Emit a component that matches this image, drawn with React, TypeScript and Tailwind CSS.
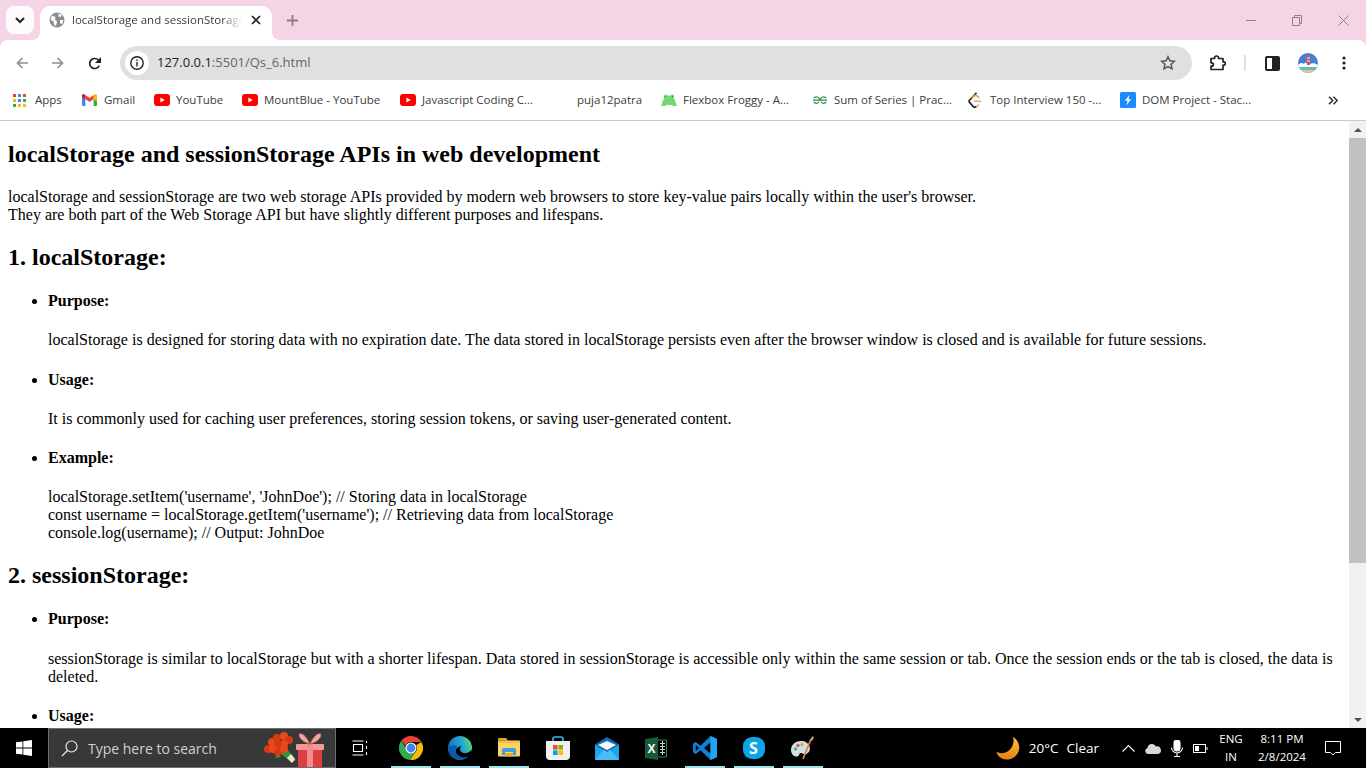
import { ReactNode } from 'react';

const Globe = () => (
  <svg width="16" height="16" viewBox="0 0 16 16">
    <circle cx="8" cy="8" r="7.5" fill="#8a8d91" />
    <path d="M3 3.5 6.5 5 6 7.5 8 9.5 7 14 5 13 4.5 9.5 1.5 7.5ZM9.5 1.5 13 3 11.5 5 9.5 4.5ZM11 8h3.5L13 12.5 11 11Z" fill="#fff" />
  </svg>
);

const YouTube = () => (
  <svg width="16" height="12" viewBox="0 0 16 12">
    <rect width="16" height="12" rx="3" fill="#f00" />
    <path d="M6.4 3.4 10.8 6 6.4 8.6Z" fill="#fff" />
  </svg>
);

const Gmail = () => (
  <svg width="15" height="12" viewBox="0 0 15 12">
    <path d="M0 2v9a1 1 0 0 0 1 1h2.4V5Z" fill="#4285f4" />
    <path d="M15 2v9a1 1 0 0 1-1 1h-2.4V5Z" fill="#34a853" />
    <path d="M11.6 1v4L15 7.5V1.6C15 .4 13.7-.3 12.8.4Z" fill="#fbbc04" />
    <path d="M3.4 5V1l4.1 3.1L11.6 1v4L7.5 8Z" fill="#ea4335" />
    <path d="M0 1.6V3l3.4 2.5V1L2.2.4C1.3-.3 0 .4 0 1.6Z" fill="#c5221f" />
  </svg>
);

const AppsGrid = () => (
  <svg width="13" height="13" viewBox="0 0 13 13">
    {['#ea4335', '#4285f4', '#ea4335', '#fbbc04', '#4285f4', '#34a853', '#34a853', '#fbbc04', '#fbbc04'].map((c, i) => (
      <rect key={i} x={(i % 3) * 5} y={Math.floor(i / 3) * 5} width="3" height="3" fill={c} />
    ))}
  </svg>
);

const Frog = () => (
  <svg width="16" height="12" viewBox="0 0 16 12">
    <path d="M3 5V2.200a1.700 1.700 0 0 1 3.300-.6h3.400A1.700 1.700 0 0 1 13 2.200V5c1 .8 1.500 2 1.700 3.500L16 12h-4.500l-.5-1H5l-.5 1H0l1.300-3.500C1.500 7 2 5.800 3 5Z" fill="#6fdc6f" />
    <circle cx="4.600" cy="2.400" r=".7" fill="#2e8b3a" />
    <circle cx="11.400" cy="2.400" r=".7" fill="#2e8b3a" />
  </svg>
);

const Gfg = () => (
  <svg width="16" height="8" viewBox="0 0 16 8" fill="none" stroke="#2f8d46" strokeWidth="1.200">
    <path d="M1 4.200h6.700A3.300 3.300 0 0 0 1.700 2.300M1.700 5.900a3.300 3.300 0 0 0 5.500-.2" />
    <path d="M15 4.200H8.300A3.300 3.300 0 0 1 14.300 2.300M14.300 5.900a3.300 3.300 0 0 1-5.500-.2" />
  </svg>
);

const LeetCode = () => (
  <svg width="14" height="17" viewBox="0 0 14 17" fill="none" strokeWidth="1.6">
    <path d="M8.5.8 1.5 8.2a1.5 1.5 0 0 0 0 2.2l3.6 4a2.3 2.3 0 0 0 3.2.2" stroke="#222" />
    <path d="M8.3 14.6 11 13M3.6 6l2.6-2a2.4 2.4 0 0 1 3.2.2l1.8 1.6" stroke="#f0a32a" />
    <path d="M6 9.3h7" stroke="#b5b5b5" />
  </svg>
);

const Bolt = () => (
  <svg width="16" height="16" viewBox="0 0 16 16">
    <rect width="16" height="16" rx="1.5" fill="#1a8cff" />
    <path d="M9.6 2.8 4.8 8.8h2.8L6.4 13.2l4.8-6H8.4Z" fill="#fff" />
  </svg>
);

const Corner = ({ flip }: { flip?: boolean }) => (
  <svg width="8" height="8" viewBox="0 0 8 8" className={flip ? 'absolute bottom-0 left-[-8px] -scale-x-100' : 'absolute bottom-0 right-[-8px]'}>
    <path d="M0 0A8 8 0 0 0 8 8H0Z" fill="#fff" />
  </svg>
);

const bookmarks: { w: string; icon?: ReactNode; label: string }[] = [
  { w: 'w-[69px]', icon: <AppsGrid />, label: 'Apps' },
  { w: 'w-[72px]', icon: <Gmail />, label: 'Gmail' },
  { w: 'w-[88px]', icon: <YouTube />, label: 'YouTube' },
  { w: 'w-[158px]', icon: <YouTube />, label: 'MountBlue - YouTube' },
  { w: 'w-[177px]', icon: <YouTube />, label: 'Javascript Coding C...' },
  { w: 'w-[84px]', label: 'puja12patra' },
  { w: 'w-[151px]', icon: <Frog />, label: 'Flexbox Froggy - A...' },
  { w: 'w-[156px]', icon: <Gfg />, label: 'Sum of Series | Prac...' },
  { w: 'w-[152px]', icon: <LeetCode />, label: 'Top Interview 150 -...' },
  { w: 'w-[208px]', icon: <Bolt />, label: 'DOM Project - Stac...' },
];

const ChromeLogo = () => (
  <svg width="24" height="24" viewBox="0 0 24 24">
    <path d="M12 0a12 12 0 0 1 10.4 6H12a6 6 0 0 0-5.6 3.8L2.5 4.6A12 12 0 0 1 12 0Z" fill="#ea4335" />
    <path d="M22.4 6A12 12 0 0 1 11 24l5.2-7.7A6 6 0 0 0 17.2 9Z" fill="#fbbc04" />
    <path d="M11 24A12 12 0 0 1 2.5 4.6l5 8.8a6 6 0 0 0 8.7 2.9Z" fill="#34a853" />
    <circle cx="12" cy="12" r="5.6" fill="#fff" />
    <circle cx="12" cy="12" r="4.4" fill="#4285f4" />
  </svg>
);

const EdgeLogo = () => (
  <svg width="24" height="24" viewBox="0 0 24 24">
    <defs>
      <linearGradient id="edgeTop" x1="0" y1="0.6" x2="1" y2="0.3">
        <stop offset="0" stopColor="#1668c4" />
        <stop offset="0.55" stopColor="#1f9fd8" />
        <stop offset="1" stopColor="#58d878" />
      </linearGradient>
    </defs>
    <circle cx="12" cy="12" r="12" fill="url(#edgeTop)" />
    <path d="M24 13.500c-4 5-11 4.500-12 .5-.4-1.700.5-3 2-3.500-4-.5-6.500 2-6.500 5.500 0 4 3.500 7 8.500 8 4-1.200 7-5 8-10.500Z" fill="#000" />
    <path d="M0 12c0 7 5.500 12 12 12 3.500 0 6.500-1.500 8.500-3.800-4 1.800-9 1-11.500-2-2-2.500-2-6 0-8.200C5 9 1.500 9.500 0 12Z" fill="#0c59a8" />
  </svg>
);

const FolderLogo = () => (
  <svg width="22" height="20" viewBox="0 0 22 20">
    <path d="M0 1a1 1 0 0 1 1-1h7l2 2.500H0Z" fill="#e0a526" />
    <rect y="2.500" width="22" height="16" rx="1" fill="#fcd462" />
    <path d="M0 5h22v-1.500H0Z" fill="#f2b93b" />
    <path d="M4 17V12a2 2 0 0 1 2-2h10a2 2 0 0 1 2 2v5h-3v-3H7v3Z" fill="#3f9fe0" />
    <rect x="7" y="15" width="8" height="3.500" fill="#e9ae2e" />
  </svg>
);

const StoreLogo = () => (
  <svg width="24" height="24" viewBox="0 0 24 24">
    <path d="M7 7V3a2 2 0 0 1 2-2h6a2 2 0 0 1 2 2v4" fill="none" stroke="#35b8ef" strokeWidth="1.600" />
    <path d="M0 5h24v15a4 4 0 0 1-4 4H4a4 4 0 0 1-4-4Z" fill="#f1f1f1" />
    <rect x="7" y="9" width="4.600" height="4.600" fill="#f25022" />
    <rect x="12.400" y="9" width="4.600" height="4.600" fill="#7fba00" />
    <rect x="7" y="14.400" width="4.600" height="4.600" fill="#00a4ef" />
    <rect x="12.400" y="14.400" width="4.600" height="4.600" fill="#ffb900" />
  </svg>
);

const MailLogo = () => (
  <svg width="24" height="23" viewBox="0 0 24 23">
    <path d="M0 7.500 12 0l12 7.500L12 15Z" fill="#0f6cbd" />
    <path d="M3 8 12 4l9 4-9 5Z" fill="#f5f7fa" />
    <path d="M0 7.500V23h24V7.500L12 15Z" fill="#20a4ea" />
    <path d="M0 23 9 12.500l3 2.500 3-2.500L24 23Z" fill="#45bdf5" />
  </svg>
);

const ExcelLogo = () => (
  <svg width="22" height="23" viewBox="0 0 22 23">
    <path d="M0 2 13 0v23L0 21Z" fill="#185c37" />
    <path d="M13 3h8.500v17H13" fill="none" stroke="#2e8b57" strokeWidth="1" />
    <path d="M15 6.500h5M15 9.500h5M15 12.500h5M15 15.500h5M17.500 4v14" stroke="#b8d8c4" strokeWidth="1" />
    <text x="2.500" y="16" fontSize="12" fontWeight="700" fill="#fff" fontFamily="Liberation Sans, sans-serif">X</text>
  </svg>
);

const VsCodeLogo = () => (
  <svg width="24" height="24" viewBox="0 0 24 24">
    <path d="M17.500 0 24 3v18l-6.500 3L7.500 14.200 2.800 18 0 16.500V7.500L2.800 6l4.700 3.800ZM17.500 6.500 11 12l6.500 5.500ZM2.800 9v6L6 12Z" fill="#0e7fd2" fillRule="evenodd" />
    <path d="M17.500 0 24 3v18l-6.500 3Z" fill="#22a5f1" />
  </svg>
);

const SkypeLogo = () => (
  <div className="w-[22px] h-[22px] rounded-[9px] bg-[#0ca5e9] flex items-center justify-center text-white font-bold text-[16px] font-['Open_Sans',sans-serif]">S</div>
);

const PaintLogo = () => (
  <svg width="24" height="24" viewBox="0 0 24 24">
    <path d="M10 5C4 5 0 9 0 14c0 4 3 7 6 6.500 3-.5 1.500-3 3.500-3.500 2-.5 3 2 6 1 3-1.500 4-4.500 3-7.500C17.500 7 14 5 10 5Z" fill="#cfe0ee" />
    <circle cx="4.500" cy="13" r="1.700" fill="#5bb05e" />
    <circle cx="7" cy="9.500" r="1.700" fill="#e15c5c" />
    <circle cx="11" cy="8.500" r="1.700" fill="#e8a33c" />
    <path d="M12 23 20 3" stroke="#d98a2b" strokeWidth="1.800" />
    <path d="M19 4 21.500 0 23 1.500 21 5Z" fill="#caa27a" />
  </svg>
);

const taskApps: { icon: ReactNode; active?: boolean }[] = [
  { icon: <ChromeLogo />, active: true },
  { icon: <EdgeLogo />, active: true },
  { icon: <FolderLogo />, active: true },
  { icon: <StoreLogo /> },
  { icon: <MailLogo /> },
  { icon: <ExcelLogo /> },
  { icon: <VsCodeLogo />, active: true },
  { icon: <SkypeLogo />, active: true },
  { icon: <PaintLogo />, active: true },
];

const Flowers = () => (
  <svg width="62" height="35" viewBox="0 0 62 35">
    <path d="M16 20 29 31l4-3-10-12Z" fill="#2f9a3c" />
    <path d="M24 26l4-4 4 5-3 4Z" fill="#efe6c6" />
    <path d="M10 20 3 19l5-3ZM18 25l-6 1 3-5Z" fill="#2f9a3c" />
    {[[5, 17], [9, 10], [14, 6], [21, 4], [26, 8], [21, 12], [15, 13], [10, 17], [15, 20], [21, 17]].map(([x, y], i) => (
      <circle key={i} cx={x} cy={y} r="4" fill={i % 2 ? '#e8481c' : '#d9380f'} />
    ))}
    <rect x="35" y="15" width="24" height="20" rx="1" fill="#dc3f42" />
    <rect x="33" y="12" width="28" height="6" rx="1" fill="#f29a9a" />
    <rect x="44" y="12" width="6" height="23" fill="#ef8c8c" />
    <path d="M47 12C42 11 36 7 36 3c0-3 6-2 11 9ZM47 12c5-1 11-5 11-9 0-3-6-2-11 9Z" fill="#f2a6a0" stroke="#a8584f" strokeWidth=".9" />
  </svg>
);

const Moon = () => (
  <svg width="24" height="24" viewBox="0 0 24 24">
    <defs>
      <linearGradient id="moonFill" x1="0" y1="0" x2="0" y2="1">
        <stop offset="0" stopColor="#fbc23a" />
        <stop offset="1" stopColor="#ec7d16" />
      </linearGradient>
    </defs>
    <path d="M17 1c5 3 7 8 6 13-1.500 6-7 10-13 9.500C5 23 1.500 20 .5 16c4 2 9 1.500 13-2 3.500-3.500 5-8 3.500-13Z" fill="url(#moonFill)" />
  </svg>
);

const Avatar = () => (
  <svg className="ml-[18px]" width="20" height="20" viewBox="0 0 20 20">
    <defs>
      <clipPath id="avatarClip"><circle cx="10" cy="10" r="10" /></clipPath>
    </defs>
    <g clipPath="url(#avatarClip)">
      <rect width="20" height="20" fill="#4a7fd0" />
      <path d="M0 12c2-2 4-3 6-1 1-2 2-2 3 0h3c2-1 5-1 8 1v3H0Z" fill="#fff" />
      <rect x="9" y="3" width="3" height="9" fill="#d9534a" />
      <path d="M9 5h3M9 8h3" stroke="#f5e6e0" />
      <rect y="14" width="20" height="3" fill="#59c3c3" />
      <rect y="17" width="20" height="3" fill="#f2bd8e" />
    </g>
  </svg>
);

function App() {
  return (
    <div className="w-[1366px] h-[768px] overflow-hidden flex flex-col bg-[#f5d5e5] font-['Open_Sans',sans-serif]">
      {/* tab strip */}
      <div className="h-[40px] flex items-end shrink-0 relative">
        <button className="ml-[6px] mb-[6px] w-[28px] h-[28px] rounded-[8px] bg-white/90 flex items-center justify-center">
          <svg width="10" height="7" viewBox="0 0 10 7" fill="none" stroke="#222" strokeWidth="2"><path d="m1 1 4 4 4-4" /></svg>
        </button>
        <div className="ml-[6px] w-[232px] h-[34px] bg-white rounded-t-[10px] relative flex items-center pl-[9px] pb-[6px]">
          <Corner flip />
          <Corner />
          <Globe />
          <span className="ml-[7px] w-[170px] overflow-hidden whitespace-nowrap text-[11.5px] text-[#3c3c3c] [mask-image:linear-gradient(to_right,black_88%,transparent)]">localStorage and sessionStorage APIs in web development</span>
          <svg className="ml-[9px]" width="10" height="10" viewBox="0 0 10 10" stroke="#222" strokeWidth="1.700"><path d="m1 1 8 8M9 1 1 9" /></svg>
        </div>
        <svg className="ml-[15px] mb-[14px]" width="11" height="11" viewBox="0 0 11 11" stroke="#8b7f86" strokeWidth="1.800"><path d="M5.500 0v11M0 5.500h11" /></svg>
        <div className="ml-auto mb-[14px] flex items-center gap-[36px] pr-[17px]">
          <svg width="10" height="11" viewBox="0 0 10 11" stroke="#8d8288"><path d="M0 5.500h10" /></svg>
          <svg width="10" height="11" viewBox="0 0 10 11" fill="none" stroke="#8d8288"><path d="M.5 2.500h7v8h-7zM2.500 2.500V.5h7v8h-2" /></svg>
          <svg width="11" height="11" viewBox="0 0 11 11" stroke="#8d8288"><path d="m.5.500 10 10M10.500.500l-10 10" /></svg>
        </div>
      </div>

      {/* toolbar */}
      <div className="h-[40px] pt-[6px] bg-white rounded-t-[8px] flex items-center shrink-0">
        <svg className="ml-[16px]" width="12" height="12" viewBox="0 0 12 12" fill="none" stroke="#8f8f8f" strokeWidth="1.700"><path d="M12 6H1.500M6.500 1l-5 5 5 5" /></svg>
        <svg className="ml-[24px]" width="12" height="12" viewBox="0 0 12 12" fill="none" stroke="#8f8f8f" strokeWidth="1.700"><path d="M0 6h10.500M5.500 1l5 5-5 5" /></svg>
        <svg className="ml-[24px]" width="13" height="13" viewBox="0 0 13 13" fill="none"><path d="M11.300 8.500A5 5 0 1 1 10.300 3L12 4.500" stroke="#222" strokeWidth="1.700" /><path d="M13 0v6H7Z" fill="#222" /></svg>
        <div className="ml-[19px] w-[1072px] h-[34px] rounded-full bg-[#e0e0e0] flex items-center pl-[5px] pr-[16px]">
          <span className="w-[24px] h-[24px] rounded-full bg-white flex items-center justify-center">
            <svg width="14" height="14" viewBox="0 0 14 14" fill="none" stroke="#222" strokeWidth="1.400"><circle cx="7" cy="7" r="6.200" /><path d="M7 6v4.500M7 3.400v1.500" /></svg>
          </span>
          <span className="ml-[8px] text-[13px] text-[#666]"><span className="text-[#222]">127.0.0.1</span>:5501/Qs_6.html</span>
          <svg className="ml-auto" width="16" height="16" viewBox="0 0 16 16" fill="none" stroke="#555" strokeWidth="1.500"><path d="m8 1.700 1.900 4.100 4.500.5-3.300 3 .9 4.500L8 11.600l-4 2.200.9-4.500-3.300-3 4.500-.5Z" /></svg>
        </div>
        <svg className="ml-[18px]" width="16" height="16" viewBox="0 0 16 16" fill="none" stroke="#222" strokeWidth="1.700"><path d="M1 3.500h3.500V3a2 2 0 0 1 4 0v.5H13v3.300h.7a1.700 1.700 0 0 1 0 3.400H13v4.300H1v-3.300h.7a1.700 1.700 0 0 0 0-3.400H1Z" strokeLinejoin="round" /></svg>
        <div className="ml-[18px] w-[2px] h-[16px] bg-[#f5d5e5]" />
        <div className="ml-[19px] w-[15px] h-[15px] rounded-[2px] border-2 border-[#222] bg-[linear-gradient(to_right,white_50%,#222_50%)]" />
        <Avatar />
        <svg className="ml-[24px]" width="4" height="14" viewBox="0 0 4 14" fill="#222"><circle cx="2" cy="2" r="1.600" /><circle cx="2" cy="7" r="1.600" /><circle cx="2" cy="12" r="1.600" /></svg>
      </div>

      {/* bookmarks */}
      <div className="h-[41px] bg-white border-b border-[#c9c9c9] flex items-center pl-[13px] shrink-0 text-[11.5px] text-[#3c3c3c]">
        {bookmarks.map((b) => (
          <div key={b.label + b.w} className={`${b.w} flex items-center whitespace-nowrap`}>
            {b.icon && <span className="w-[22px] flex items-center">{b.icon}</span>}
            <span>{b.label}</span>
          </div>
        ))}
        <svg className="ml-0" width="10" height="9" viewBox="0 0 10 9" fill="none" stroke="#333" strokeWidth="1.600"><path d="m1 .7 3.700 3.800L1 8.300M5.500.7l3.700 3.800-3.700 3.800" /></svg>
      </div>

      {/* page */}
      <div className="flex h-[607px] bg-white shrink-0">
        <div className="flex-1 overflow-hidden px-[8px] font-['Liberation_Serif',serif] text-[16px] leading-[18px] text-black">
          <h2 className="text-[24px] leading-[27px] font-bold my-[19.92px]">localStorage and sessionStorage APIs in web development</h2>
          <p>localStorage and sessionStorage are two web storage APIs provided by modern web browsers to store key-value pairs locally within the user's browser.<br />They are both part of the Web Storage API but have slightly different purposes and lifespans.</p>
          <h2 className="text-[24px] leading-[27px] font-bold my-[19.92px]">1. localStorage:</h2>
          <ul className="list-disc pl-[40px]">
            <li>
              <h4 className="font-bold my-[21.28px]">Purpose:</h4>
              localStorage is designed for storing data with no expiration date. The data stored in localStorage persists even after the browser window is closed and is available for future sessions.
            </li>
            <li>
              <h4 className="font-bold my-[21.28px]">Usage:</h4>
              It is commonly used for caching user preferences, storing session tokens, or saving user-generated content.
            </li>
            <li>
              <h4 className="font-bold my-[21.28px]">Example:</h4>
              localStorage.setItem('username', 'JohnDoe'); // Storing data in localStorage<br />
              const username = localStorage.getItem('username'); // Retrieving data from localStorage<br />
              console.log(username); // Output: JohnDoe
            </li>
          </ul>
          <h2 className="text-[24px] leading-[27px] font-bold my-[19.92px]">2. sessionStorage:</h2>
          <ul className="list-disc pl-[40px]">
            <li>
              <h4 className="font-bold my-[21.28px]">Purpose:</h4>
              sessionStorage is similar to localStorage but with a shorter lifespan. Data stored in sessionStorage is accessible only within the same session or tab. Once the session ends or the tab is closed, the data is deleted.
            </li>
            <li>
              <h4 className="font-bold my-[21.28px]">Usage:</h4>
            </li>
          </ul>
        </div>
        {/* scrollbar */}
        <div className="w-[17px] bg-[#f1f1f1] flex flex-col items-center">
          <div className="h-[17px] flex items-center justify-center">
            <div className="w-0 h-0 border-x-[4px] border-x-transparent border-b-[4px] border-b-[#505050]" />
          </div>
          <div className="w-full h-[425px] bg-[#c1c1c1]" />
          <div className="mt-auto h-[17px] flex items-center justify-center">
            <div className="w-0 h-0 border-x-[4px] border-x-transparent border-t-[4px] border-t-[#505050]" />
          </div>
        </div>
      </div>

      {/* taskbar */}
      <div className="h-[40px] bg-black flex items-center shrink-0 text-white">
        <div className="w-[48px] flex justify-center">
          <svg width="16" height="16" viewBox="0 0 16 16" fill="#fff"><path d="M0 2.300 6.500 1.400v6.200H0ZM7.300 1.300 16 0v7.600H7.300ZM0 8.400h6.500v6.200L0 13.700ZM7.300 8.400H16V16l-8.700-1.300Z" /></svg>
        </div>
        <div className="w-[288px] h-[40px] bg-[#383838] border border-[#6e6e6e] flex items-center pl-[12px] relative">
          <svg width="17" height="17" viewBox="0 0 17 17" fill="none" stroke="#e8e8e8" strokeWidth="1.200"><circle cx="10.500" cy="6.500" r="5.500" /><path d="M6.500 10.500 1 16" /></svg>
          <span className="ml-[10px] text-[14px] text-[#d0d0d0]">Type here to search</span>
          <div className="absolute left-[214px] top-[3px]"><Flowers /></div>
        </div>
        <div className="w-[48px] flex justify-center">
          <svg width="16" height="16" viewBox="0 0 16 16" fill="none" stroke="#fff" strokeWidth="1.100"><path d="M.5 1h11M.5 15h11M1.500 4.500h9v7h-9zM14.500 1v2M14.500 6v3M14.500 12v3" /></svg>
        </div>
        <div className="flex h-full ml-[2px]">
          {taskApps.map((a, i) => (
            <div key={i} className="w-[49px] h-full flex items-center justify-center relative">
              {a.icon}
              {a.active && <div className="absolute bottom-0 left-[5px] w-[40px] h-[2px] bg-[#98e4ee]" />}
            </div>
          ))}
        </div>
        <div className="ml-auto flex items-center h-full">
          <Moon />
          <span className="ml-[9px] text-[13.500px]">20°C</span>
          <span className="ml-[8px] text-[13.500px]">Clear</span>
          <svg className="ml-[23px]" width="13" height="8" viewBox="0 0 13 8" fill="none" stroke="#fff" strokeWidth="1.100"><path d="m.5 7.500 6-6 6 6" /></svg>
          <svg className="ml-[10px]" width="16" height="11" viewBox="0 0 16 11" fill="#d8d8d8"><path d="M3 11a3 3 0 0 1-.5-5.900A4.500 4.500 0 0 1 11 3.500 3.800 3.800 0 0 1 13 11Z" /></svg>
          <svg className="ml-[10px]" width="12" height="17" viewBox="0 0 12 17" fill="none" stroke="#fff" strokeWidth="1.100"><rect x="3" y="0" width="6" height="11" rx="3" fill="#fff" /><path d="M.5 7.500a5.500 5.500 0 0 0 11 0M6 13v4M3 16.500h6" /></svg>
          <svg className="ml-[10px]" width="15" height="9" viewBox="0 0 15 9" fill="none" stroke="#fff"><rect x=".5" y=".5" width="12" height="8" /><rect x="2" y="2" width="4" height="5" fill="#fff" stroke="none" /><path d="M14 3v3" /></svg>
          <div className="ml-[10px] w-[26px] flex flex-col items-center text-[11.500px] leading-[18px]"><span>ENG</span><span>IN</span></div>
          <div className="ml-[6px] w-[64px] flex flex-col items-center text-[11.500px] leading-[18px]"><span>8:11 PM</span><span>2/8/2024</span></div>
          <svg className="ml-[11px] mr-[25px]" width="16" height="16" viewBox="0 0 16 16" fill="none" stroke="#fff"><path d="M.5 1.500h15v11h-5L8 15l-2.500-2.500h-5Z" /></svg>
        </div>
      </div>
    </div>
  );
}

export default App;
